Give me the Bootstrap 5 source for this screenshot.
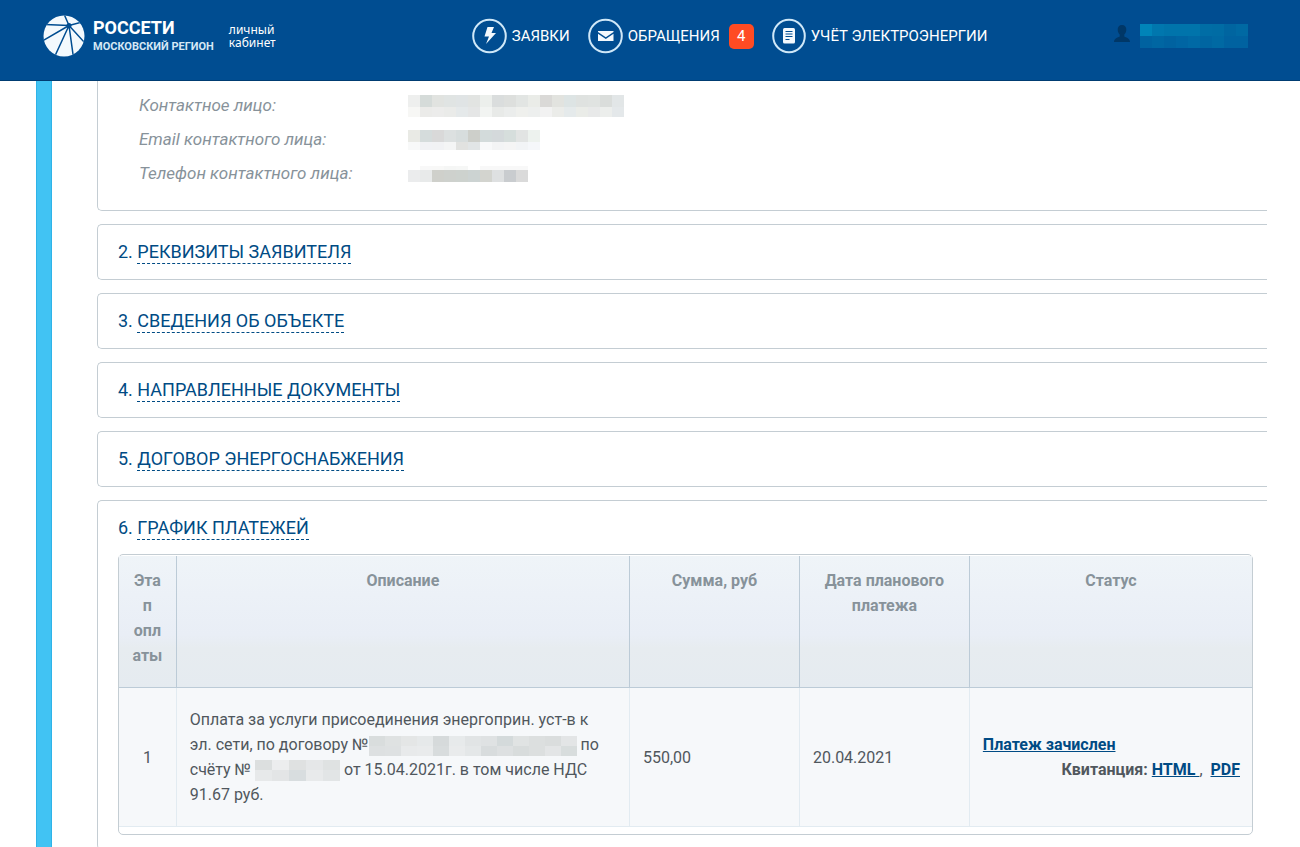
<!DOCTYPE html>
<html lang="ru">
<head>
<meta charset="utf-8">
<meta name="viewport" content="width=device-width, initial-scale=1">
<title>Россети Московский регион — личный кабинет</title>
<link href="https://cdn.jsdelivr.net/npm/bootstrap@5.3.0/dist/css/bootstrap.min.css" rel="stylesheet">
<style>
  :root { --brand: #004d91; --line: #c4cdd3; }
  body { font: 16px/25px "Roboto", "Noto Sans", sans-serif; color: #50575d; background: #fff; }
  a { color: #004b84; }
  .topbar { background: var(--brand); border-bottom: 1px solid #003c72; padding: 0 52px 8px 43px; height: 81px; font-size: 15px; }
  .brand-title { font: bold 18px/22px "Roboto", sans-serif; }
  .brand-sub { font: bold 11px/16px "Roboto", sans-serif; color: #d5e8f5; }
  .cabinet { font: 12px/13px "Noto Sans", sans-serif; margin-left: 15px; }
  .main-menu { gap: 18px; margin-left: 196px; }
  .main-menu a { color: #fff; text-decoration: none; gap: 5px; }
  .counter { width: 25px; height: 25px; border-radius: 5px; background: #ff4b23; margin-left: 4px; }
  .profile { gap: 9px; }
  .rail { flex: 0 0 16px; margin-left: 36px; background: #41c3f3; border: solid #2fb3e8; border-width: 0 1px; }
  .sections { margin: 0 33px 0 45px; gap: 13px; }
  .panel { border: 1px solid var(--line); border-right: 0; border-radius: 5px 0 0 5px; padding: 14px 14px 14px 20px; }
  .panel-contact { border-top: 0; border-top-left-radius: 0; padding: 12px 14px 24px 41px; }
  .contact-list { display: grid; grid-template-columns: 269px 1fr; row-gap: 9px; margin: 0; }
  .contact-list dt { font-weight: 400; font-style: italic; font-size: 17px; color: #87929a; }
  .contact-list dd { margin: 0; display: flex; align-items: center; }
  .panel h2 { font-size: 18px; line-height: 26px; font-weight: 400; margin: 0; color: #004b84; }
  .panel h2 a { text-decoration: none; border-bottom: 1px dashed #004b84; padding-bottom: 1px; }
  .pay-frame { border: 1px solid var(--line); border-radius: 5px; padding: 1px 0 7px; margin-top: 13px; }
  .pay-table { table-layout: fixed; width: 100%; border-collapse: separate; border-spacing: 0; }
  .pay-table th { vertical-align: top; text-align: center; font-weight: 700; color: #87929a; padding: 12px 12px 19px; overflow-wrap: break-word;
    background: linear-gradient(#eff4f8, #e9eef6 60%, #e7ecf0 70%, #e5ebf0); border: solid #bccbd7; border-width: 0 1px 1px 0; }
  .pay-table td { vertical-align: middle; padding: 19px 13px; background: #f6f8fa; border: solid #e2ebf1; border-width: 0 1px 1px 0; }
  .pay-table th:last-child, .pay-table td:last-child { border-right: 0; }
  .pay-table td:last-child { font-weight: 700; padding-right: 12px; }
  .pay-table .description { padding-right: 24px; }
</style>
</head>
<body>
<header class="topbar sticky-top d-flex align-items-center text-white">
  <a href="#" class="d-flex align-items-center text-white text-decoration-none">
    <svg width="42" height="42" viewBox="0 0 42 42" aria-hidden="true">
      <clipPath id="globe"><circle cx="21" cy="21" r="20.5"/></clipPath>
      <circle cx="21" cy="21" r="20.5" fill="#f3f9fd"/>
      <g stroke="#004d91" stroke-width="1.5" fill="none" clip-path="url(#globe)">
        <path d="M26 10.500 21-1M26 10.500 43 6M26 10.500 2 9.500M26 10.500 0 25.500M26 10.500 11 43M26 10.500 30.500 43M26 10.500 42 28"/>
      </g>
      <circle cx="26" cy="10.500" r="2.500" fill="#004d91"/>
    </svg>
    <span class="ms-2 d-flex flex-column">
      <span class="brand-title">РОССЕТИ</span>
      <span class="brand-sub">МОСКОВСКИЙ РЕГИОН</span>
    </span>
    <span class="cabinet">личный<br>кабинет</span>
  </a>
  <nav class="main-menu d-flex align-items-center">
    <a href="#" class="d-flex align-items-center">
      <svg width="35" height="36" viewBox="0 0 35 36" aria-hidden="true"><circle cx="17.500" cy="18" r="16.300" fill="none" stroke="#cfe8f8" stroke-width="2"/><path d="M15.500 9h6.500l-2.500 6H24L14 26l3-7.500h-4.500z" fill="#f3f9fd"/></svg>
      <span>ЗАЯВКИ</span>
    </a>
    <a href="#" class="d-flex align-items-center">
      <svg width="35" height="36" viewBox="0 0 35 36" aria-hidden="true"><circle cx="17.500" cy="18" r="16.300" fill="none" stroke="#cfe8f8" stroke-width="2"/><path d="M10 13h15.500v1l-7.700 5.200L10 14zM10 15.800l7.800 5.200 7.700-5.200V23H10z" fill="#f3f9fd"/></svg>
      <span>ОБРАЩЕНИЯ</span>
      <span class="counter d-flex align-items-center justify-content-center">4</span>
    </a>
    <a href="#" class="d-flex align-items-center">
      <svg width="34" height="36" viewBox="0 0 34 36" aria-hidden="true"><ellipse cx="17" cy="18" rx="15.800" ry="16.300" fill="none" stroke="#cfe8f8" stroke-width="2"/><rect x="11" y="10" width="12" height="15.500" rx="1.500" fill="#f3f9fd"/><path d="M13.500 13.500h7M13.500 16h7M13.500 18.500h7M13.500 21.500h4" stroke="#004d91" stroke-width="1.200"/></svg>
      <span>УЧЁТ ЭЛЕКТРОЭНЕРГИИ</span>
    </a>
  </nav>
  <a href="#" class="profile d-flex align-items-center ms-auto" aria-label="Профиль">
    <svg width="18" height="18" viewBox="0 0 18 18" class="mb-1" aria-hidden="true"><path d="M9 0c3 0 4.500 2 4.300 5-.2 2-1 3.500-2 4.500v2c2 1.300 5.700 1.700 5.700 5.500H1c0-3.800 3.700-4.200 5.700-5.500v-2c-1-1-1.800-2.500-2-4.500C4.500 2 6 0 9 0z" fill="#003767"/></svg>
    <svg class="mosaic" data-cell="12" data-rows="12:0084b8,0077ae,0074ab,0074ab,0074ab,006da5,006ca4,0065a0,0069a3|12:0062a0,0066a2,0062a0,0065a3,0069a5,0065a1,0069a3,0062a0,0062a0"></svg>
  </a>
</header>

<div class="d-flex">
  <div class="rail"></div>
  <main class="sections flex-grow-1 d-flex flex-column">
    <section class="panel panel-contact">
      <dl class="contact-list">
        <dt>Контактное лицо:</dt>
        <dd><svg class="mosaic" data-cell="12" data-rows="12:eeefee,d5dbd9,e1e3e0,e0e4e3,e0e4e5,e2e4e2,ecefec,dadddd,dddfdd,e2e5e3,eaece8,dad9d7,e2e3df,dde4e4,dfe2e0,e0e3e1,dadddb,e2e6e7|10:f7f7f5,ebebe9,ececeb,eaebe9,e5e9ea,e5e6e6,f2f4f2,e8eae8,ebedec,eff0ed,edefee,f2f2f2,ebece9,e5eaeb,eaece8,e8e9e9,eceeec,e4e8ea"></svg></dd>
        <dt>Email контактного лица:</dt>
        <dd><svg class="mosaic" data-cell="12" data-rows="12:e9eae5,d5dcdc,d9d9d9,dce0e0,d7dddd,cdcfca,d3dbdb,d4d9db,d6dedc,e2e4e3,edf2ee|8:f8f9f9,f1f2f5,f1f2f4,f4f5f5,e1e2e0,e1e5e6,f8f9fa,f3f4f5,f5f5f5,f2f4f6,f5f7fa"></svg></dd>
        <dt>Телефон контактного лица:</dt>
        <dd><svg class="mosaic" data-cell="12" data-rows="4:ffffff,f8f8f8,f8f8f7,f5f6f5,f6f7f6,ffffff,f8f8f8,f8f8f8,f8f8f8,f8f8f8|12:ebeced,e8eaea,cfd0cb,ced1cd,cdd2ce,ccd3d2,d3d4cf,dee0e1,c9cccf,dadada"></svg></dd>
      </dl>
    </section>
    <section class="panel"><h2>2. <a href="#">РЕКВИЗИТЫ ЗАЯВИТЕЛЯ</a></h2></section>
    <section class="panel"><h2>3. <a href="#">СВЕДЕНИЯ ОБ ОБЪЕКТЕ</a></h2></section>
    <section class="panel"><h2>4. <a href="#">НАПРАВЛЕННЫЕ ДОКУМЕНТЫ</a></h2></section>
    <section class="panel"><h2>5. <a href="#">ДОГОВОР ЭНЕРГОСНАБЖЕНИЯ</a></h2></section>
    <section class="panel">
      <h2>6. <a href="#">ГРАФИК ПЛАТЕЖЕЙ</a></h2>
      <div class="pay-frame">
        <table class="pay-table">
          <colgroup><col style="width:5.1%"><col style="width:40%"><col style="width:15%"><col style="width:15%"><col style="width:24.9%"></colgroup>
          <thead>
            <tr><th scope="col">Этап оплаты</th><th scope="col">Описание</th><th scope="col">Сумма, руб</th><th scope="col">Дата планового платежа</th><th scope="col">Статус</th></tr>
          </thead>
          <tbody>
            <tr>
              <td class="text-center">1</td>
              <td class="description"><span>Оплата за услуги присоединения энергоприн. уст-в к</span> <span>эл. сети, по договору №</span><svg class="mosaic" data-cell="16" data-rows="10:d9dddd,dfe2e2,e4e6e6,e6e9ea,d6dadb,e7eaeb,e1e4e5,dfe2e3,d4dadb,e0e3e3,dcdfdf,dadddd,e3e5e6|10:dde0e1,dee1e2,e8eaeb,e9ebec,d8dcdd,e9ebec,e4e7e8,d8dcdd,dde0e1,d8dcdc,dcdfdf,e3e5e6,d8dddd"></svg> <span>по</span> <span>счёту №</span> <svg class="mosaic" data-cell="17" data-rows="10:dcdfdf,ecedee,dfe1e1,e5e7e8,dfe2e2|11:e7e9ea,e3e5e6,d8dddf,e8eaeb,e2e5e6"></svg> <span>от 15.04.2021г. в том числе НДС</span> <span>91.67 руб.</span></td>
              <td>550,00</td>
              <td>20.04.2021</td>
              <td><a href="#">Платеж зачислен</a><div class="text-end">Квитанция: <a href="#">HTML&nbsp;</a><span class="fw-normal">,</span>&nbsp; <a href="#">PDF</a></div></td>
            </tr>
          </tbody>
        </table>
      </div>
    </section>
  </main>
</div>
<script src="https://cdn.jsdelivr.net/npm/bootstrap@5.3.0/dist/js/bootstrap.bundle.min.js"></script>
<script>
  // Hidden personal data: each row is "height:colour,colour,…", each colour one cell.
  document.querySelectorAll('svg.mosaic').forEach(function (svg) {
    var cell = +svg.dataset.cell, y = 0, w = 0, out = '';
    svg.dataset.rows.split('|').forEach(function (row) {
      var p = row.split(':'), h = +p[0], colours = p[1].split(',');
      colours.forEach(function (c, i) {
        out += '<rect x="' + i * cell + '" y="' + y + '" width="' + cell + '" height="' + h + '" fill="#' + c + '"/>';
      });
      w = Math.max(w, colours.length * cell);
      y += h;
    });
    svg.setAttribute('width', w);
    svg.setAttribute('height', y);
    svg.setAttribute('shape-rendering', 'crispEdges');
    svg.innerHTML = out;
  });
</script>
</body>
</html>
